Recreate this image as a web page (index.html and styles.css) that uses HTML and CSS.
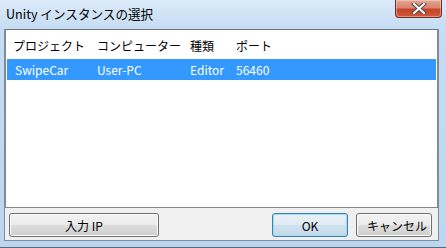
FILE: index.html
```html
<!DOCTYPE html>
<html>

<head>
    <title>Unity インスタンスの選択</title>
    <meta charset="UTF-8">
    <link rel="stylesheet" href="styles.css">
</head>

<body>
    <div class="window">
        <div class="titlebar">
            <span class="title">Unity インスタンスの選択</span>
            <div class="close-button">
                <svg width="16" height="11" viewBox="0 0 16 11">
                    <path d="M3 1 L13 10 M13 1 L3 10" stroke="#4a4a4a" stroke-width="4" stroke-linecap="square" />
                    <path d="M3 1 L13 10 M13 1 L3 10" stroke="#ffffff" stroke-width="2" stroke-linecap="square" />
                </svg>
            </div>
        </div>

        <div class="client">
            <div class="list-view">
                <div class="list-row list-header">
                    <span class="col col-project">プロジェクト</span>
                    <span class="col col-computer">コンピューター</span>
                    <span class="col col-type">種類</span>
                    <span class="col col-port">ポート</span>
                </div>
                <div class="list-row selected">
                    <span class="col col-project">SwipeCar</span>
                    <span class="col col-computer">User-PC</span>
                    <span class="col col-type">Editor</span>
                    <span class="col col-port">56460</span>
                </div>
            </div>

            <div class="button-row">
                <button class="button button-wide">入力 IP</button>
                <span class="spacer"></span>
                <button class="button button-default">OK</button>
                <button class="button button-cancel">キャンセル</button>
            </div>
        </div>
    </div>
</body>

</html>
```

FILE: styles.css
```css
body {
    margin: 0;
    padding: 0;
    width: 446px;
    height: 248px;
    overflow: hidden;
    font-family: "Noto Sans CJK JP", "Noto Sans", sans-serif;
    font-size: 12px;
}

.window {
    box-sizing: border-box;
    width: 446px;
    height: 248px;
    display: flex;
    flex-direction: column;
    padding: 0 7px 6px 4px;
    background: linear-gradient(to bottom, #dbeaf8 0%, #c5dcf3 30px, #bcd6f1 100%);
    border-bottom: 1px solid #5a6a7c;
}

.titlebar {
    height: 29px;
    display: flex;
    align-items: flex-start;
}

.title {
    margin-top: 6px;
    margin-left: 2px;
    color: #000;
    font-size: 12.6px;
    line-height: 16px;
}

.close-button {
    margin-left: auto;
    margin-right: -3px;
    width: 47px;
    height: 18px;
    box-sizing: border-box;
    display: flex;
    align-items: center;
    justify-content: center;
    border: 1px solid #6d2d24;
    border-top: none;
    border-radius: 0 0 4px 4px;
    background: linear-gradient(to bottom, #e8a493 0%, #d98570 45%, #c5442a 55%, #d0583c 100%);
    box-shadow: inset 0 0 0 1px rgba(255, 255, 255, 0.35);
}

.client {
    flex: 1;
    display: flex;
    flex-direction: column;
    background-color: #f0f0f0;
    border: 1px solid #7b8ea3;
    border-top: none;
}

.list-view {
    height: 179px;
    box-sizing: border-box;
    background-color: #fff;
    border: 1px solid #828790;
    border-top-color: #6a7480;
    padding-top: 5px;
}

.list-row {
    display: flex;
    height: 21px;
    align-items: center;
    margin: 0 1px;
}

.list-header {
    height: 20px;
    padding-bottom: 4px;
    color: #000;
}

.list-header .col-project {
    padding-left: 6px;
}

.selected {
    background-color: #3399ff;
    color: #fff;
}

.col {
    white-space: nowrap;
}

.col-project {
    width: 90px;
    padding-left: 8px;
    box-sizing: border-box;
}

.col-computer {
    width: 93px;
}

.col-type {
    width: 46px;
}

.button-row {
    display: flex;
    align-items: center;
    padding: 5px 6px 0 4px;
    gap: 8px;
}

.spacer {
    flex: 1;
}

.button {
    height: 24px;
    width: 76px;
    padding: 0;
    font-family: "Noto Sans CJK JP", "Noto Sans", sans-serif;
    font-size: 12px;
    color: #000;
    border: 1px solid #707070;
    border-radius: 3px;
    background: linear-gradient(to bottom, #f2f2f2 0%, #ebebeb 49%, #dddddd 51%, #cfcfcf 100%);
    box-shadow: inset 0 0 0 1px #fcfcfc;
    white-space: nowrap;
}

.button-wide {
    width: 150px;
}

.button-default {
    border-color: #3c7fb1;
    background: linear-gradient(to bottom, #e9f1f7 0%, #dfeaf3 49%, #d0e1ee 51%, #c4d9e8 100%);
    box-shadow: inset 0 0 0 1px #9fdcf5;
}

.button-cancel {
    text-align: left;
    padding-left: 10px;
}
```
